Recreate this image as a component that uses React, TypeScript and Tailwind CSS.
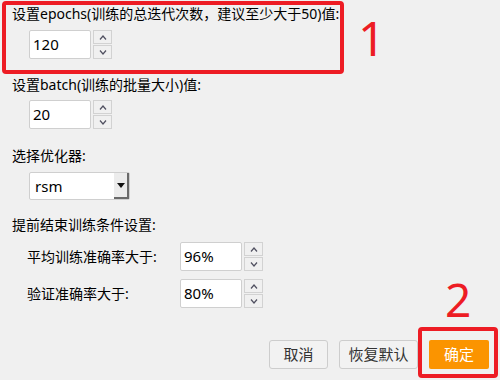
const font = { fontFamily: '"Noto Sans", "Noto Sans CJK SC", sans-serif' };

function Arrows() {
  return (
    <div className="ml-[2px] flex flex-col gap-[1px]">
      <div className="flex h-[14px] w-[19px] items-center justify-center border border-[#d2d2d2] bg-[#f0f0f0]">
        <svg width="8" height="5" viewBox="0 0 8 5">
          <path d="M1 4.5 L4 1 L7 4.5" fill="none" stroke="#505060" strokeWidth="1.2" />
        </svg>
      </div>
      <div className="flex h-[14px] w-[19px] items-center justify-center border border-[#d2d2d2] bg-[#f0f0f0]">
        <svg width="8" height="5" viewBox="0 0 8 5">
          <path d="M1 0.5 L4 4 L7 0.5" fill="none" stroke="#505060" strokeWidth="1.2" />
        </svg>
      </div>
    </div>
  );
}

function Spin({ value }: { value: string }) {
  return (
    <div className="flex">
      <div className="flex h-[29px] w-[62px] items-center rounded-[2px] border border-[#cfcfcf] bg-white pl-[3px] text-[15px] text-black">
        {value}
      </div>
      <Arrows />
    </div>
  );
}

export default function App() {
  return (
    <div className="relative h-[380px] w-[500px] overflow-hidden bg-[#f0f0f0] text-black" style={font}>
      <div className="flex flex-col pl-[12px] pt-[4px] text-[14px]">
        <div className="leading-[20px]">设置epochs(训练的总迭代次数，建议至少大于50)值:</div>
        <div className="ml-[17px] mt-[6px]">
          <Spin value="120" />
        </div>

        <div className="mt-[16px] leading-[20px]">设置batch(训练的批量大小)值:</div>
        <div className="ml-[17px] mt-[5px]">
          <Spin value="20" />
        </div>

        <div className="mt-[17px] leading-[20px]">选择优化器:</div>
        <div className="ml-[17px] mt-[6px] flex h-[28px] w-[101px] items-center justify-between rounded-[2px] border border-[#cfcfcf] bg-white">
          <span className="pl-[5px] text-[15px]">rsm</span>
          <div className="flex h-[26px] w-[15px] items-center justify-center border-b-2 border-r-2 border-[#6a6a6a] bg-[#ececec]">
            <svg width="8" height="5" viewBox="0 0 8 5">
              <path d="M0 0 L8 0 L4 5 Z" fill="#111" />
            </svg>
          </div>
        </div>

        <div className="mt-[15px] leading-[20px]">提前结束训练条件设置:</div>
        <div className="ml-[15px] mt-[7px] flex items-center">
          <span className="w-[153px] leading-[20px]">平均训练准确率大于:</span>
          <Spin value="96%" />
        </div>
        <div className="ml-[15px] mt-[8px] flex items-center">
          <span className="w-[153px] leading-[20px]">验证准确率大于:</span>
          <Spin value="80%" />
        </div>

        <div className="mr-[11px] mt-[32px] flex justify-end gap-[11px] text-[15px]">
          <button className="h-[29px] w-[59px] rounded-[3px] border border-[#cdcdcd] bg-[#f2f2f2] text-[#333]">取消</button>
          <button className="h-[29px] w-[79px] rounded-[3px] border border-[#cdcdcd] bg-[#f2f2f2] text-[#333]">恢复默认</button>
          <button className="h-[29px] w-[60px] rounded-[2px] bg-[#fb9400] text-white">确定</button>
        </div>
      </div>

      {/* annotations */}
      <div className="absolute left-[2px] top-[1px] h-[73px] w-[342px] rounded-[4px] border-4 border-[#ed1c24]" />
      <div className="absolute left-[358px] top-[8px] text-[48px] leading-[60px] text-[#ed1c24]" style={{ fontFamily: '"Noto Sans", sans-serif' }}>1</div>
      <div className="absolute left-[418px] top-[327px] h-[51px] w-[80px] rounded-[4px] border-4 border-[#ed1c24]" />
      <div className="absolute left-[445px] top-[270px] text-[46px] leading-[58px] text-[#ed1c24]" style={{ fontFamily: '"Noto Sans", sans-serif' }}>2</div>
    </div>
  );
}
